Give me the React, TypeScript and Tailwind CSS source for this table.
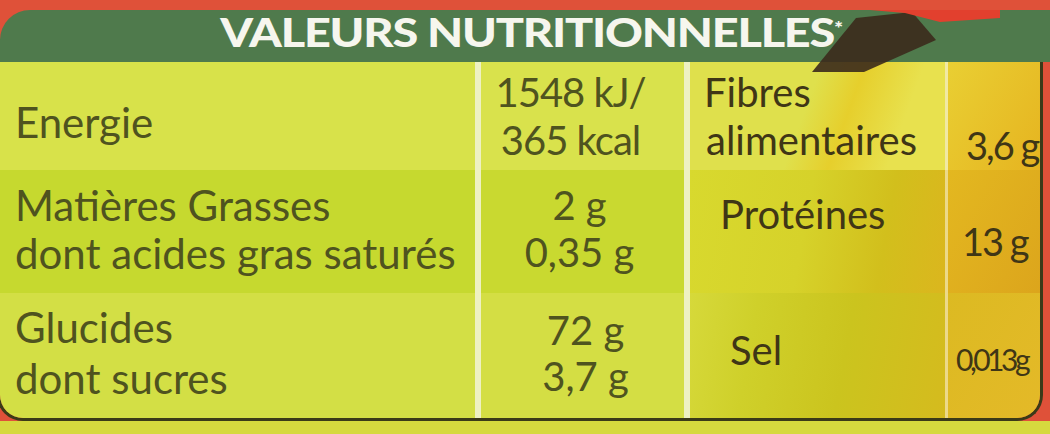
export default function App() {
  const ink = "text-[#4f531f]";
  const inkDark = "text-[#3f3616]";

  return (
    <div className="relative h-[434px] w-[1050px] overflow-hidden bg-[#df5139] font-['Lato','Open_Sans',sans-serif] leading-none">
      <div className="h-[10px]" />

      {/* header band */}
      <div className="flex h-[52px] items-center justify-center rounded-tl-[30px] bg-[#4f7a4c] pb-[8px]">
        <h1 className="origin-center scale-x-[1.2] pl-[10px] text-[39px] font-black tracking-[-1px] text-[#f6f6ee]">
          VALEURS NUTRITIONNELLES<span className="relative -top-[12px] text-[18px]">*</span>
        </h1>
      </div>

      {/* shadow falling across the header */}
      <div className="pointer-events-none absolute inset-0 bg-[#3b2a1c]/90 [clip-path:polygon(812px_72px,864px_72px,936px_40px,912px_12px,856px_18px)]" />
      <div className="pointer-events-none absolute inset-0 bg-[#e2402e] [clip-path:polygon(870px_10px,1000px_10px,1000px_18px,940px_22px,905px_13px)]" />

      {/* table */}
      <div className="-ml-[3px] w-[1046px] overflow-hidden rounded-b-[26px] border-b-[3px] border-l-[3px] border-r-[3px] border-[#3b3a18]">
        <div className="grid grid-cols-[481px_209px_258px_1fr] grid-rows-[108px_123px_125px] text-[42px]">
          {/* row 1 */}
          <div className={`flex items-center border-r-[6px] border-[#eef1c2] bg-[#d8e24a] pl-[15px] pt-[12px] ${ink}`}>
            Energie
          </div>
          <div className={`flex flex-col items-center justify-center gap-[8px] border-r-[6px] border-[#eef1c2] bg-[#d9e24c] pr-[24px] text-[40px] tracking-[-1px] ${ink}`}>
            <span>1548 kJ/</span>
            <span>365 kcal</span>
          </div>
          <div className={`flex flex-col justify-center gap-[8px] border-r-[3px] border-[#f1e9a4] bg-[linear-gradient(110deg,#dfe04c_0%,#dfe04c_45%,#e6cf2c_60%,#e8e14e_80%)] pl-[14px] text-[40px] ${inkDark}`}>
            <span>Fibres</span>
            <span className="pl-[2px]">alimentaires</span>
          </div>
          <div className={`flex items-end bg-[linear-gradient(120deg,#e9cf33,#e6b420)] pb-[6px] pl-[18px] text-[38px] tracking-[-2px] ${inkDark}`}>
            3,6 g
          </div>

          {/* row 2 */}
          <div className={`flex flex-col justify-center gap-[6px] border-r-[6px] border-[#eef1c2] bg-[#c6d92f] pb-[6px] pl-[15px] ${ink}`}>
            <span>Matières Grasses</span>
            <span>dont acides gras saturés</span>
          </div>
          <div className={`flex flex-col items-center justify-center gap-[7px] border-r-[6px] border-[#eef1c2] bg-[#c9d930] pb-[6px] pr-[6px] text-[40px] ${ink}`}>
            <span>2 g</span>
            <span>0,35 g</span>
          </div>
          <div className={`flex items-start border-r-[3px] border-[#ecd98a] bg-[linear-gradient(100deg,#d8d92e_0%,#d6d22a_45%,#d2bf1c_75%,#dbb61e_100%)] pl-[30px] pt-[24px] text-[40px] ${inkDark}`}>
            Protéines
          </div>
          <div className={`flex items-center bg-[linear-gradient(120deg,#e3b820,#dca51c)] pl-[14px] pt-[18px] text-[38px] tracking-[-2px] ${inkDark}`}>
            13 g
          </div>

          {/* row 3 */}
          <div className={`flex flex-col justify-center gap-[9px] border-r-[6px] border-[#eef1c2] bg-[#d3df45] pl-[15px] pb-[6px] ${ink}`}>
            <span>Glucides</span>
            <span>dont sucres</span>
          </div>
          <div className={`flex flex-col items-center justify-center gap-[6px] border-r-[6px] border-[#eef1c2] bg-[#d4de44] pb-[6px] pl-[6px] text-[40px] ${ink}`}>
            <span>72 g</span>
            <span>3,7 g</span>
          </div>
          <div className={`flex items-center border-r-[3px] border-[#ecd98a] bg-[linear-gradient(100deg,#d6d93a_0%,#cfd02a_25%,#cbc41e_60%,#d5bb1e_100%)] pl-[40px] pb-[12px] text-[40px] ${inkDark}`}>
            Sel
          </div>
          <div className={`flex items-center bg-[linear-gradient(120deg,#dcba22,#e4b928)] pl-[8px] pt-[6px] text-[30px] tracking-[-3.5px] ${inkDark}`}>
            0,013g
          </div>
        </div>
      </div>

      <div className="h-[20px] bg-[#d6d93e]" />
    </div>
  );
}
